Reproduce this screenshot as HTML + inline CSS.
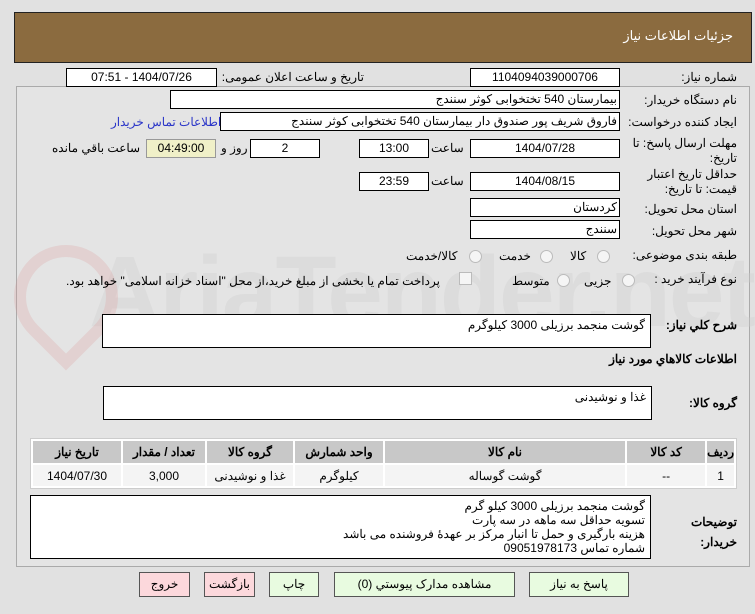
<!DOCTYPE html>
<html><head><meta charset="utf-8"><style>
body{margin:0;width:755px;height:614px;background:#e1e1e1;font-family:Tahoma,"Liberation Sans","Noto Sans CJK SC",sans-serif;font-size:12px;color:#000;position:relative;overflow:hidden;direction:rtl}
.a{position:absolute}
.hdr{left:15px;top:12px;width:736px;height:49px;background:#8b6b3f;border:1px solid #222}
.hdr span{position:absolute;right:18px;top:15px;color:#fff;font-size:13px}
.panel{left:17px;top:86px;width:732px;height:479px;border:1px solid #aaa;background:#e4e4e4}
.box{position:absolute;background:#fff;border:1px solid #000;height:17px;line-height:17px;text-align:center;font-size:12px;box-sizing:content-box}
.l{position:absolute;white-space:nowrap}
.btn{position:absolute;top:572px;height:23px;line-height:23px;text-align:center;border:1px solid #555;background:#e8fbe0;font-size:12px}
table{border-collapse:separate;border-spacing:2px;position:absolute;left:31px;top:438px;width:707px;background:#fff;border:1px solid #ccc}
th{background:#c8c8c8;height:22px;font-size:12px;padding:0}
td{background:#f4f4f4;height:21px;text-align:center;padding:0}
.ta{position:absolute;background:#fff;border:1px solid #000;text-align:right;padding:3px 5px;box-sizing:border-box;line-height:15px}
.radio{position:absolute;width:11px;height:11px;border:1px solid #bbb;border-radius:50%;background:#f5f5f5}
</style></head><body>
<div class="a hdr"><span>جزئیات اطلاعات نیاز</span></div>
<div class="a panel"></div>
<div class="l" style="left:90px;top:235px;font-size:100px;color:rgba(205,205,205,0.35);direction:ltr;font-weight:bold;letter-spacing:-2px">AriaTender.net</div>
<div class="a" style="left:15px;top:245px;width:80px;height:80px;border:12px solid rgba(220,150,150,0.25);border-radius:50% 50% 50% 0;transform:rotate(-45deg)"></div>

<div class="l" style="right:17px;top:70px">شماره نیاز:</div>
<div class="box" style="left:471px;top:68px;width:148px">1104094039000706</div>
<div class="l" style="right:390px;top:70px">تاریخ و ساعت اعلان عمومی:</div>
<div class="box" style="left:67px;top:68px;width:149px">1404/07/26 - 07:51</div>

<div class="l" style="right:17px;top:93px">نام دستگاه خریدار:</div>
<div class="box" style="left:171px;top:90px;text-align:right;padding-right:2px;width:446px">بیمارستان 540 تختخوابی کوثر سنندج</div>

<div class="l" style="right:17px;top:115px">ایجاد کننده درخواست:</div>
<div class="box" style="left:221px;top:112px;width:396px;text-align:right;padding-right:2px">فاروق شریف پور صندوق دار بیمارستان 540 تختخوابی کوثر سنندج</div>
<div class="l" style="left:112px;top:115px;color:#2a35c8">اطلاعات تماس خریدار</div>

<div class="l" style="right:17px;top:136px;line-height:15px;width:110px;white-space:normal">مهلت ارسال پاسخ: تا تاریخ:</div>
<div class="box" style="left:471px;top:139px;width:148px">1404/07/28</div>
<div class="l" style="left:432px;top:141px">ساعت</div>
<div class="box" style="left:360px;top:139px;width:68px">13:00</div>
<div class="box" style="left:251px;top:139px;width:68px">2</div>
<div class="l" style="left:222px;top:141px">روز و</div>
<div class="box" style="left:147px;top:139px;width:68px;background:#f0f0c8;border-color:#999">04:49:00</div>
<div class="l" style="left:53px;top:141px">ساعت باقي مانده</div>

<div class="l" style="right:17px;top:167px;line-height:15px;width:110px;white-space:normal">حداقل تاریخ اعتبار قیمت: تا تاریخ:</div>
<div class="box" style="left:471px;top:172px;width:148px">1404/08/15</div>
<div class="l" style="left:432px;top:174px">ساعت</div>
<div class="box" style="left:360px;top:172px;width:68px">23:59</div>

<div class="l" style="right:17px;top:202px">استان محل تحویل:</div>
<div class="box" style="left:471px;top:198px;width:146px;text-align:right;padding-right:2px">کردستان</div>
<div class="l" style="right:17px;top:224px">شهر محل تحویل:</div>
<div class="box" style="left:471px;top:220px;width:146px;text-align:right;padding-right:2px">سنندج</div>

<div class="l" style="right:17px;top:248px">طبقه بندی موضوعی:</div>
<div class="radio" style="left:598px;top:250px"></div><div class="l" style="left:571px;top:249px">کالا</div>
<div class="radio" style="left:541px;top:250px"></div><div class="l" style="left:500px;top:249px">خدمت</div>
<div class="radio" style="left:470px;top:250px"></div><div class="l" style="left:407px;top:249px">کالا/خدمت</div>

<div class="l" style="right:17px;top:272px">نوع فرآیند خرید :</div>
<div class="radio" style="left:623px;top:274px"></div><div class="l" style="left:585px;top:274px">جزیی</div>
<div class="radio" style="left:558px;top:274px"></div><div class="l" style="left:513px;top:274px">متوسط</div>
<div class="a" style="left:460px;top:272px;width:11px;height:11px;border:1px solid #bbb;background:#f5f5f5"></div>
<div class="l" style="left:67px;top:274px">پرداخت تمام یا بخشی از مبلغ خرید،از محل "اسناد خزانه اسلامی" خواهد بود.</div>

<div class="l" style="right:17px;top:318px;font-weight:bold">شرح کلي نياز:</div>
<div class="ta" style="left:103px;top:314px;width:549px;height:34px">گوشت منجمد برزیلی 3000 کیلوگرم</div>
<div class="l" style="right:17px;top:352px;font-weight:bold">اطلاعات کالاهاي مورد نياز</div>
<div class="l" style="right:17px;top:396px;font-weight:bold">گروه کالا:</div>
<div class="ta" style="left:104px;top:386px;width:549px;height:34px">غذا و نوشیدنی</div>

<table><tr><th style="width:26px">ردیف</th><th style="width:78px">کد کالا</th><th>نام کالا</th><th style="width:88px">واحد شمارش</th><th style="width:86px">گروه کالا</th><th style="width:82px">تعداد / مقدار</th><th style="width:88px">تاریخ نیاز</th></tr>
<tr><td>1</td><td>--</td><td>گوشت گوساله</td><td>کیلوگرم</td><td>غذا و نوشیدنی</td><td>3,000</td><td>1404/07/30</td></tr></table>

<div class="l" style="right:17px;top:512px;font-weight:bold;line-height:20px;white-space:normal;width:50px">توضیحات خریدار:</div>
<div class="ta" style="left:31px;top:495px;width:621px;height:64px;line-height:14px;padding-top:3px;font-size:12px">گوشت منجمد برزیلی 3000 کیلو گرم<br>تسویه حداقل سه  ماهه در سه پارت<br>هزینه بارگیری و حمل تا انبار مرکز بر عهدهٔ فروشنده می باشد<br>شماره تماس 09051978173</div>

<div class="btn" style="left:530px;width:98px">پاسخ به نیاز</div>
<div class="btn" style="left:335px;width:179px">مشاهده مدارک پیوستي (0)</div>
<div class="btn" style="left:270px;width:48px">چاپ</div>
<div class="btn" style="left:205px;width:49px;background:#fcd8dc">بازگشت</div>
<div class="btn" style="left:140px;width:49px;background:#fcd8dc">خروج</div>
</body></html>
